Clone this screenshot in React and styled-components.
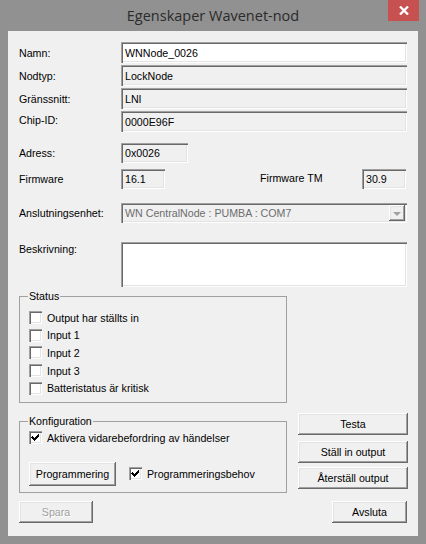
import React from "react";
import styled, { createGlobalStyle } from "styled-components";

const GlobalStyle = createGlobalStyle`
  body {
    margin: 0;
    background: #919191;
    font-family: "Liberation Sans", Arial, sans-serif;
    font-size: 8pt;
    color: #000;
  }
`;

const sunken = `
  box-shadow: inset 1px 1px #a0a0a0, inset 2px 2px #696969,
    inset -1px -1px #ffffff, inset -2px -2px #e3e3e3;
`;

const raised = `
  box-shadow: inset -1px -1px #696969, inset 1px 1px #ffffff,
    inset -2px -2px #a0a0a0, inset 2px 2px #e3e3e3;
`;

const Window = styled.div`
  width: 426px;
  height: 544px;
  background: #919191;
  display: flex;
  flex-direction: column;
`;

const TitleBar = styled.div`
  height: 31px;
  flex: none;
  display: grid;
  grid-template-columns: 1fr auto 1fr;
`;

const Title = styled.div`
  grid-column: 2;
  font-family: "Open Sans", "Noto Sans", sans-serif;
  font-size: 14.5px;
  color: #2b2b2b;
  line-height: 31px;
`;

const CloseButton = styled.div`
  grid-column: 3;
  justify-self: end;
  align-self: start;
  width: 31px;
  height: 21px;
  margin-right: 7px;
  background: #c75050;
  display: flex;
  align-items: center;
  justify-content: center;

  svg {
    display: block;
  }
`;

const Client = styled.div`
  flex: 1;
  margin: 0 8px 8px;
  background: #f0f0f0;
  padding: 11px 11px 0;
  display: flex;
  flex-direction: column;
`;

const FieldStack = styled.div`
  display: flex;
  flex-direction: column;
  gap: 2px;
`;

const Row = styled.div`
  display: flex;
  align-items: ${(p) => (p.$top ? "flex-start" : "center")};
  margin-top: ${(p) => p.$mt || 0}px;
`;

const Label = styled.div`
  width: ${(p) => p.$w || 102}px;
  flex: none;
  margin-left: ${(p) => p.$ml || 0}px;
  padding-top: ${(p) => p.$pt || 0}px;
  margin-top: ${(p) => p.$nudge || 0}px;
  white-space: nowrap;
`;

const Field = styled.div`
  box-sizing: border-box;
  height: ${(p) => p.$h || 21}px;
  width: ${(p) => (p.$w ? `${p.$w}px` : "auto")};
  flex: ${(p) => (p.$w ? "none" : 1)};
  background: ${(p) => (p.$white ? "#ffffff" : "#f0f0f0")};
  color: ${(p) => (p.$disabled ? "#6d6d6d" : "#000")};
  ${sunken}
  padding: 0 2px 0 4px;
  display: flex;
  align-items: center;
  white-space: nowrap;
  overflow: hidden;
`;

const ComboText = styled.span`
  flex: 1;
`;

const ComboArrow = styled.div`
  width: 16px;
  height: 16px;
  flex: none;
  background: #f0f0f0;
  ${raised}
  display: flex;
  align-items: center;
  justify-content: center;
`;

const Arrow = styled.div`
  width: 0;
  height: 0;
  border-left: 4px solid transparent;
  border-right: 4px solid transparent;
  border-top: 4px solid #a0a0a0;
  margin-top: 1px;
`;

const GroupBox = styled.div`
  position: relative;
  box-sizing: border-box;
  width: 268px;
  flex: none;
  height: ${(p) => p.$h}px;
  margin-top: ${(p) => p.$mt || 0}px;
  border: 1px solid #a0a0a0;
  padding: ${(p) => p.$pad};
  display: flex;
  flex-direction: column;
`;

const Caption = styled.div`
  position: absolute;
  top: -7px;
  left: 8px;
  padding: 0 1px;
  background: #f0f0f0;
  line-height: 13px;
`;

const CheckRow = styled.div`
  height: 17.6px;
  display: flex;
  align-items: center;
  gap: 5px;
  white-space: nowrap;
`;

const Box = styled.div`
  width: 13px;
  height: 13px;
  flex: none;
  background: #ffffff;
  ${sunken}

  svg {
    display: block;
  }
`;

const Lower = styled.div`
  display: flex;
  align-items: flex-start;
  margin-top: 10px;
  gap: 11px;
`;

const SideButtons = styled.div`
  display: flex;
  flex-direction: column;
  width: 110px;
`;

const Button = styled.div`
  box-sizing: border-box;
  width: ${(p) => p.$w}px;
  height: ${(p) => p.$h || 22}px;
  margin-top: ${(p) => p.$mt || 0}px;
  background: #f0f0f0;
  ${raised}
  display: flex;
  align-items: center;
  justify-content: center;
  white-space: nowrap;
  color: ${(p) => (p.$disabled ? "#a0a0a0" : "#000")};
  text-shadow: ${(p) => (p.$disabled ? "1px 1px #ffffff" : "none")};
`;

const ProgRow = styled.div`
  display: flex;
  align-items: center;
  margin-top: 15px;
  gap: 13px;
`;

const Footer = styled.div`
  display: flex;
  justify-content: space-between;
  margin-top: 8px;
`;

// classic 7x7 pixel check mark, three pixels tall per column
const Check = () => (
  <svg width="13" height="13" viewBox="0 0 13 13" shapeRendering="crispEdges">
    <path
      d="M3 5h1v1h1v1h1v-1h1v-1h1v-1h1v-1h1v3h-1v1h-1v1h-1v1h-1v1h-1v-1h-1v-1h-1v-1h-1z"
      fill="#000"
    />
  </svg>
);

const CheckBox = ({ checked, children }) => (
  <CheckRow>
    <Box>{checked && <Check />}</Box>
    <span>{children}</span>
  </CheckRow>
);

const App = () => {
  return (
    <>
      <GlobalStyle />
      <Window>
        <TitleBar>
          <Title>Egenskaper Wavenet-nod</Title>
          <CloseButton>
            <svg width="10" height="9" viewBox="0 0 10 9">
              <path d="M1 0.5 L9 8.5 M9 0.5 L1 8.5" stroke="#fff" strokeWidth="2.3" />
            </svg>
          </CloseButton>
        </TitleBar>
        <Client>
          <FieldStack>
            <Row>
              <Label>Namn:</Label>
              <Field $white>WNNode_0026</Field>
            </Row>
            <Row>
              <Label>Nodtyp:</Label>
              <Field>LockNode</Field>
            </Row>
            <Row>
              <Label>Gränssnitt:</Label>
              <Field>LNI</Field>
            </Row>
            <Row>
              <Label $nudge={-4}>Chip-ID:</Label>
              <Field>0000E96F</Field>
            </Row>
          </FieldStack>
          <Row $mt={11}>
            <Label>Adress:</Label>
            <Field $w={67} $h={20}>0x0026</Field>
          </Row>
          <Row $mt={6}>
            <Label>Firmware</Label>
            <Field $w={44} $h={20}>16.1</Field>
            <Label $ml={95} $nudge={-2}>Firmware TM</Label>
            <Field $w={44} $h={20}>30.9</Field>
          </Row>
          <Row $mt={14}>
            <Label>Anslutningsenhet:</Label>
            <Field $h={20} $disabled>
              <ComboText>WN CentralNode : PUMBA : COM7</ComboText>
              <ComboArrow>
                <Arrow />
              </ComboArrow>
            </Field>
          </Row>
          <Row $mt={19} $top>
            <Label $pt={1}>Beskrivning:</Label>
            <Field $white $h={45} />
          </Row>
          <GroupBox $mt={9} $h={107} $pad="12px 0 0 9px">
            <Caption>Status</Caption>
            <CheckBox>Output har ställts in</CheckBox>
            <CheckBox>Input 1</CheckBox>
            <CheckBox>Input 2</CheckBox>
            <CheckBox>Input 3</CheckBox>
            <CheckBox>Batteristatus är kritisk</CheckBox>
          </GroupBox>
          <Lower>
            <GroupBox $mt={8} $h={72} $pad="7px 0 0 9px">
              <Caption>Konfiguration</Caption>
              <CheckBox checked>Aktivera vidarebefordring av händelser</CheckBox>
              <ProgRow>
                <Button $w={87} $h={24}>Programmering</Button>
                <CheckBox checked>Programmeringsbehov</CheckBox>
              </ProgRow>
            </GroupBox>
            <SideButtons>
              <Button $w={110}>Testa</Button>
              <Button $w={110} $mt={6}>Ställ in output</Button>
              <Button $w={110} $mt={4}>Återställ output</Button>
            </SideButtons>
          </Lower>
          <Footer>
            <Button $w={74} $disabled>Spara</Button>
            <Button $w={75}>Avsluta</Button>
          </Footer>
        </Client>
      </Window>
    </>
  );
};

export default App;
